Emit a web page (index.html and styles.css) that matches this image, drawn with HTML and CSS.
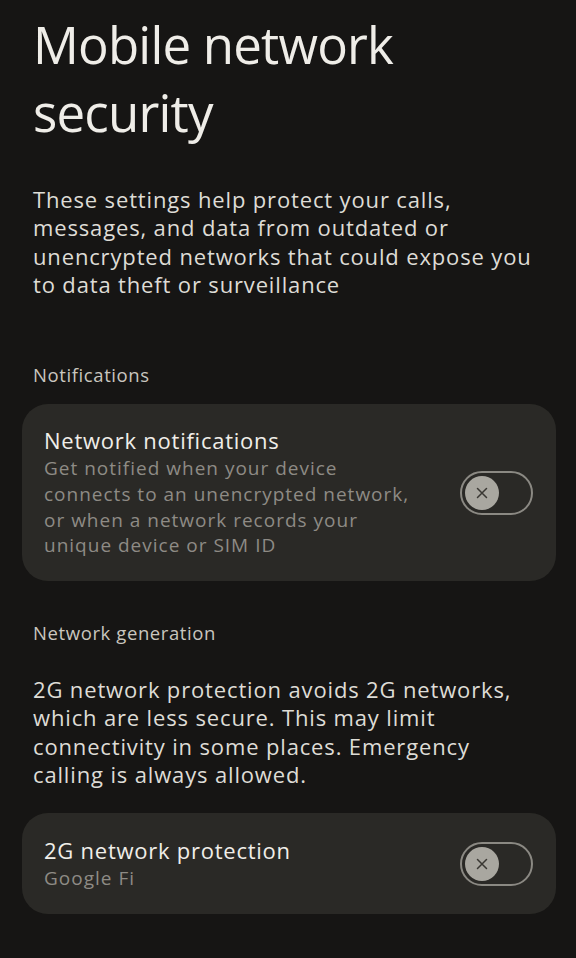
FILE: index.html
```html
<!DOCTYPE html>
<html>
<head>
<meta charset="utf-8">
<link rel="stylesheet" href="styles.css">
</head>
<body>
<div class="page">
  <h1 class="title">Mobile network<br>security</h1>
  <p class="intro">These settings help protect your calls,<br>messages, and data from outdated or<br>unencrypted networks that could expose you<br>to data theft or surveillance</p>

  <div class="section-label first">Notifications</div>
  <div class="card card-tall">
    <div class="card-text">
      <div class="card-title">Network notifications</div>
      <div class="card-sub">Get notified when your device<br>connects to an unencrypted network,<br>or when a network records your<br>unique device or SIM ID</div>
    </div>
    <div class="toggle"><div class="knob"><svg viewBox="0 0 16 16" width="16" height="16"><path d="M3.5 3.5 L12.5 12.5 M12.5 3.5 L3.5 12.5" stroke="#3a3833" stroke-width="1.5" stroke-linecap="round" fill="none"/></svg></div></div>
  </div>

  <div class="section-label second">Network generation</div>
  <p class="intro para2">2G network protection avoids 2G networks,<br>which are less secure. This may limit<br>connectivity in some places. Emergency<br>calling is always allowed.</p>

  <div class="card card-short">
    <div class="card-text">
      <div class="card-title">2G network protection</div>
      <div class="card-sub">Google Fi</div>
    </div>
    <div class="toggle"><div class="knob"><svg viewBox="0 0 16 16" width="16" height="16"><path d="M3.5 3.5 L12.5 12.5 M12.5 3.5 L3.5 12.5" stroke="#3a3833" stroke-width="1.5" stroke-linecap="round" fill="none"/></svg></div></div>
  </div>
</div>
</body>
</html>
```
FILE: styles.css
```css
html, body {
  margin: 0;
  padding: 0;
  background: #161514;
}
body {
  width: 576px;
  height: 958px;
  overflow: hidden;
  font-family: "Open Sans", "Noto Sans", sans-serif;
  color: #e8e6e1;
}
.page {
  padding: 10px 20px 0 22px;
}
.title {
  margin: 0;
  padding: 0 0 0 11px;
  font-weight: 400;
  font-size: 51px;
  line-height: 68px;
  color: #efede8;
  letter-spacing: -0.8px;
}
.intro {
  margin: 39px 0 0 0;
  padding: 0 0 0 11px;
  font-size: 22px;
  line-height: 28.3px;
  letter-spacing: 0.85px;
  color: #dedcd6;
  white-space: nowrap;
}
.section-label {
  padding-left: 11px;
  font-size: 18.5px;
  line-height: 24px;
  letter-spacing: 0.6px;
  color: #c9c6bf;
}
.section-label.first { margin-top: 65px; }
.section-label.second { margin-top: 40px; }
.para2 { margin-top: 30px; }
.card {
  background: #2a2926;
  border-radius: 26px;
  display: flex;
  align-items: center;
  padding: 0 23px 0 22px;
  width: 534px;
  box-sizing: border-box;
}
.card-tall {
  margin-top: 17px;
  height: 177px;
}
.card-short {
  margin-top: 25px;
  height: 101px;
}
.card-text {
  flex: 1;
  white-space: nowrap;
}
.card-title {
  font-size: 22px;
  line-height: 28px;
  font-weight: 500;
  letter-spacing: 0.75px;
  color: #f0eee9;
}
.card-sub {
  margin-top: 2px;
  font-size: 19px;
  line-height: 25.8px;
  letter-spacing: 1px;
  color: #8e8b85;
}
.toggle {
  width: 73px;
  height: 44px;
  border: 2.5px solid #8b8983;
  border-radius: 24px;
  display: flex;
  align-items: center;
  padding-left: 2.5px;
  box-sizing: border-box;
  flex: none;
}
.knob {
  width: 34px;
  height: 34px;
  border-radius: 50%;
  background: #a9a7a0;
  display: flex;
  align-items: center;
  justify-content: center;
}
```
